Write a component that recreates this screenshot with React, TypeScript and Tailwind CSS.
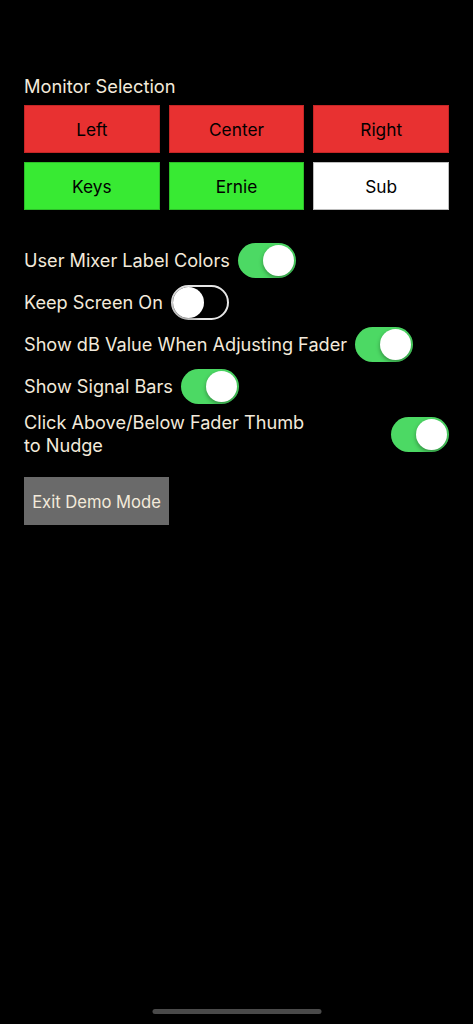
import React from "react";

const font = { fontFamily: "Inter, 'Noto Sans', sans-serif" };

function Toggle({ on }: { on: boolean }) {
  return on ? (
    <div className="relative h-[35px] w-[58px] shrink-0 rounded-full bg-[#4cd964]">
      <div className="absolute right-[2px] top-[2px] h-[31px] w-[31px] rounded-full bg-white shadow-[0_2px_4px_rgba(0,0,0,0.35)]" />
    </div>
  ) : (
    <div className="relative h-[35px] w-[58px] shrink-0 rounded-full border-2 border-[#e6e6e6] bg-black">
      <div className="absolute left-0 top-0 h-[31px] w-[31px] rounded-full bg-white shadow-[0_2px_4px_rgba(0,0,0,0.35)]" />
    </div>
  );
}

const buttons = [
  { label: "Left", cls: "bg-[#e83131] border-[#c52626]" },
  { label: "Center", cls: "bg-[#e83131] border-[#c52626]" },
  { label: "Right", cls: "bg-[#e83131] border-[#c52626]" },
  { label: "Keys", cls: "bg-[#38ea33] border-[#2cbf28]" },
  { label: "Ernie", cls: "bg-[#38ea33] border-[#2cbf28]" },
  { label: "Sub", cls: "bg-white border-[#bdbdbd]" },
];

export default function App() {
  return (
    <div className="relative h-[1024px] w-full overflow-hidden bg-black text-[#f3eadb]" style={font}>
      <div className="px-6 pt-[74px]">
        <div className="text-[18.3px] leading-[24px]">Monitor Selection</div>
        <div className="mt-[7px] grid grid-cols-3 gap-x-[9px] gap-y-[9px]">
          {buttons.map((b) => (
            <div
              key={b.label}
              className={`flex h-[48px] items-center justify-center border pt-[2px] text-[17.3px] text-black ${b.cls}`}
            >
              {b.label}
            </div>
          ))}
        </div>

        <div className="mt-[33px] flex flex-col gap-[7px] text-[18.15px] leading-[23px]">
          <div className="flex items-center gap-[8px]">
            <span>User Mixer Label Colors</span>
            <Toggle on />
          </div>
          <div className="flex items-center gap-[8px]">
            <span>Keep Screen On</span>
            <Toggle on={false} />
          </div>
          <div className="flex items-center gap-[8px]">
            <span>Show dB Value When Adjusting Fader</span>
            <Toggle on />
          </div>
          <div className="flex items-center gap-[8px]">
            <span>Show Signal Bars</span>
            <Toggle on />
          </div>
          <div className="flex items-center justify-between">
            <span className="w-[290px]">Click Above/Below Fader Thumb to Nudge</span>
            <Toggle on />
          </div>
        </div>

        <div className="mt-[20px] flex h-[48px] w-[145px] items-center justify-center bg-[#6a6a6a] pt-[2px] text-[16.6px]">
          Exit Demo Mode
        </div>
      </div>

      <div className="absolute bottom-[10px] left-1/2 h-[5px] w-[169px] -translate-x-1/2 rounded-full bg-[#4a4a4a]" />
    </div>
  );
}
